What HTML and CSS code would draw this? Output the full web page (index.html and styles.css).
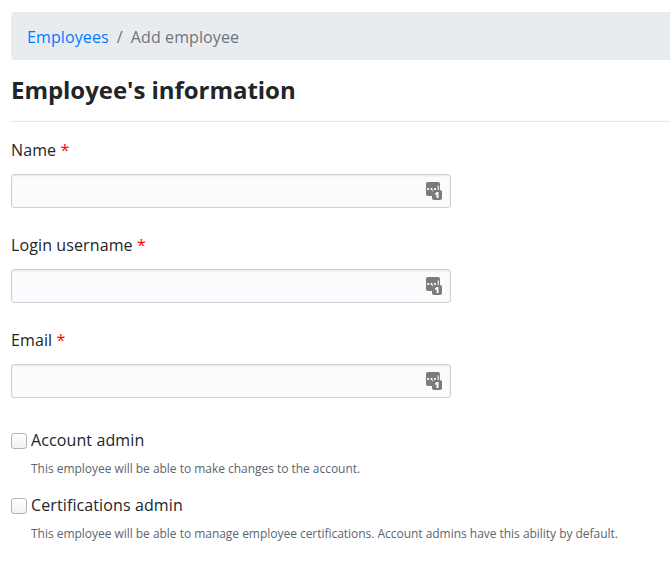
FILE: index.html
```html
<!DOCTYPE html>
<html lang="en">
<head>
<meta charset="utf-8">
<title>Add employee</title>
<link rel="stylesheet" href="styles.css">
</head>
<body>
<svg class="defs" width="0" height="0"><symbol id="manager" viewBox="0 0 16 18">
<path fill="#7b7b7b" d="M2 0h10a2 2 0 0 1 2 2v6H6v6H2a2 2 0 0 1-2-2V2a2 2 0 0 1 2-2z"/>
<path fill="#fff" d="M1.300 6h1.700v2h-1.700zM4.700 6h1.700v2h-1.700zM8.100 6h1.700v2h-1.700zM11.700 3.500h1.100v4.500h-1.100z"/>
<rect x="6" y="8" width="10" height="10" rx="2" fill="#7b7b7b"/>
<path fill="#fff" d="M10.700 10h1.800v6h-1.900v-3.800l-1.300.8-.5-1.200z"/>
</symbol></svg>
<nav class="breadcrumb"><a href="#">Employees</a><span class="sep">/</span><span>Add employee</span></nav>
<main>
<h1>Employee's information</h1>
<form>
<div class="field"><label for="name">Name <b>*</b></label><div class="control"><input id="name" type="text"><svg class="icon"><use href="#manager"/></svg></div></div>
<div class="field"><label for="login">Login username <b>*</b></label><div class="control"><input id="login" type="text"><svg class="icon"><use href="#manager"/></svg></div></div>
<div class="field"><label for="email">Email <b>*</b></label><div class="control"><input id="email" type="text"><svg class="icon"><use href="#manager"/></svg></div></div>
<div class="check"><input id="acc" type="checkbox"><div><label for="acc">Account admin</label><p>This employee will be able to make changes to the account.</p></div></div>
<div class="check"><input id="cert" type="checkbox"><div><label for="cert">Certifications admin</label><p>This employee will be able to manage employee certifications. Account admins have this ability by default.</p></div></div>
</form>
</main>
</body>
</html>
```
FILE: styles.css
```css
* { box-sizing: border-box; }
body { margin: 12px 0 0 11px; background: #fff; color: #212529; font: 16px/24px "Open Sans", sans-serif; letter-spacing: .11px; overflow: hidden; }
.defs { display: block; }
.breadcrumb { height: 48px; padding: 13px 16px 11px; background: #e9ecef; border-radius: 4px 0 0 4px; color: #6c757d; display: flex; gap: 8px; }
.breadcrumb a { color: #007bff; text-decoration: none; }
h1 { margin: 0 0 16px; padding-top: 14px; height: 62px; font-size: 24px; line-height: 32px; font-weight: 700; letter-spacing: -.04px; border-bottom: 1px solid #e5e5e5; }
.field { height: 95px; }
.field label { display: block; height: 36px; }
.field b { color: #f00; font-weight: 400; }
.control { position: relative; width: 440px; height: 34px; }
.control input { display: block; width: 440px; height: 34px; border: 1px solid #ced0d4; border-radius: 3px; background: #fafbfd; box-shadow: inset 0 1px 2px rgba(0,0,0,.075); }
.icon { position: absolute; left: 415px; top: 8px; width: 16px; height: 18px; }
.check { display: flex; gap: 4px; height: 65px; padding-top: 5px; }
.check input { appearance: none; width: 16px; height: 16px; margin: 5px 0 0; border: 1px solid #bab4ae; border-radius: 3px; background: linear-gradient(#fff, #f3f2f1); }
.check p { margin: 8px 0 0; font-size: 12px; line-height: 18px; letter-spacing: -.03px; color: #5c6670; }
```
